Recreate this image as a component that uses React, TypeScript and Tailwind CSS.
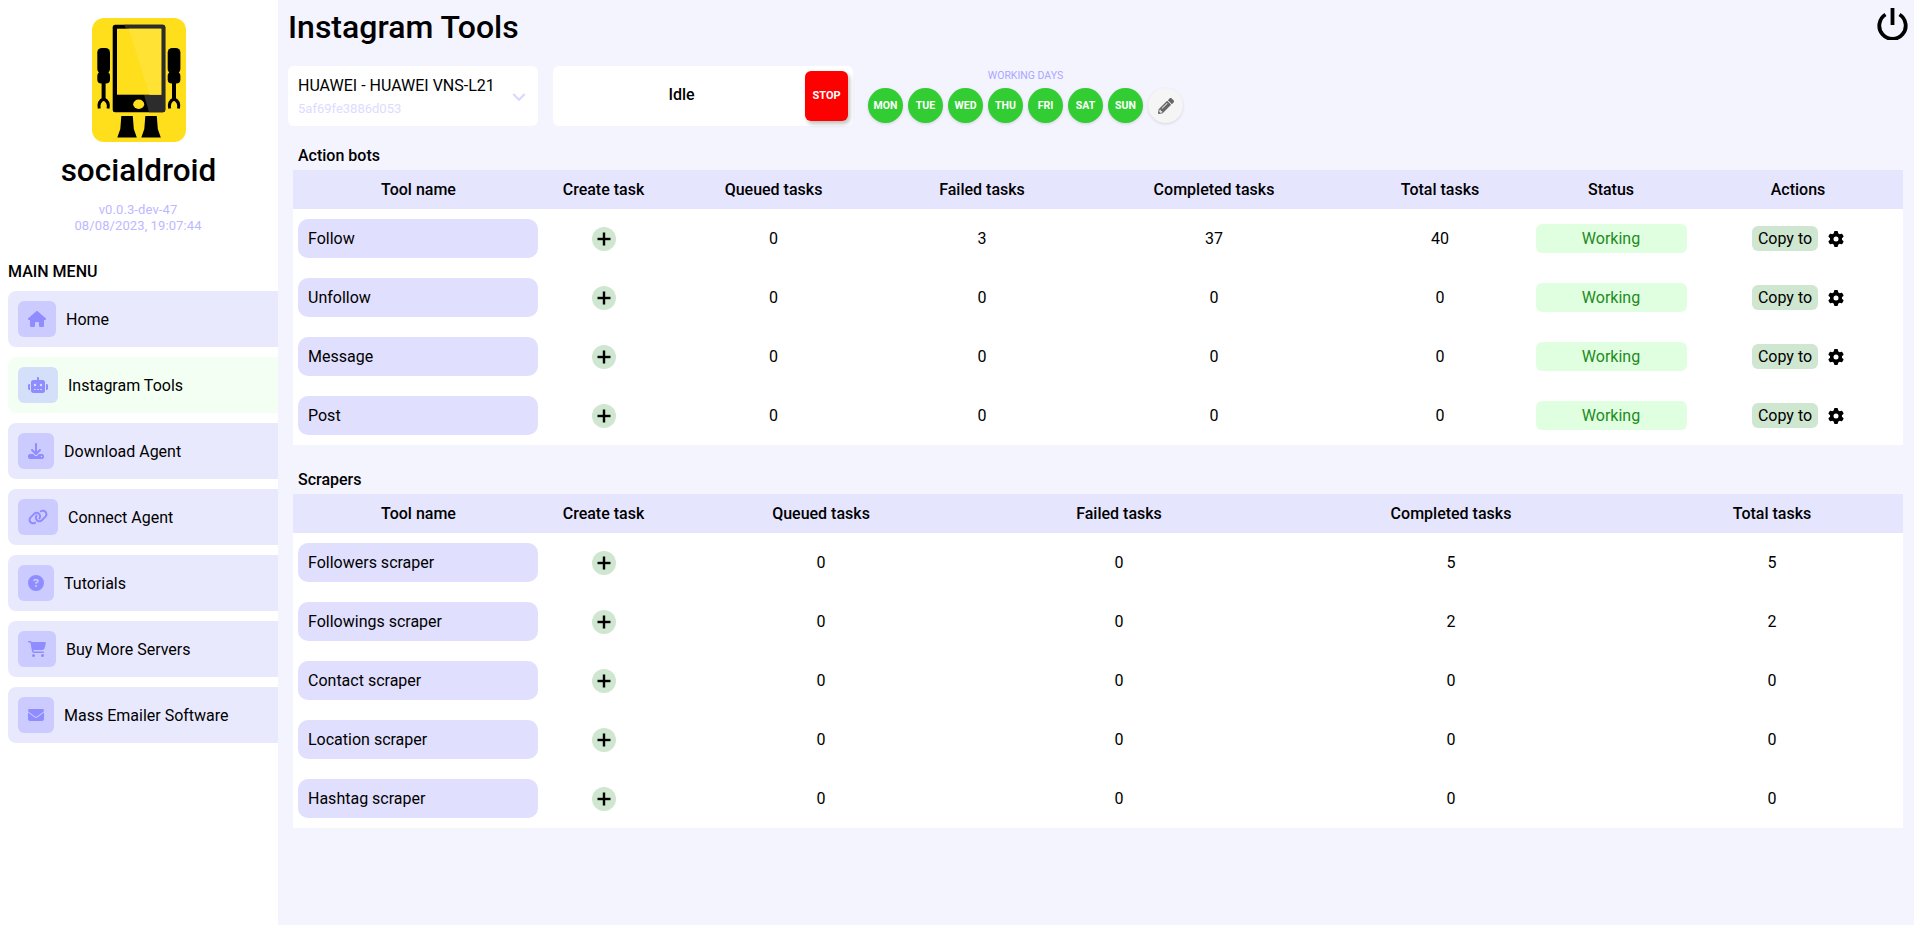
import React from 'react';
import {
  FaHouse,
  FaRobot,
  FaDownload,
  FaLink,
  FaCircleQuestion,
  FaCartShopping,
  FaEnvelope,
  FaGear,
} from 'react-icons/fa6';
import { FaPencilAlt } from 'react-icons/fa';
import { MdExpandMore } from 'react-icons/md';

const menu = [
  { label: 'Home', icon: FaHouse, iconClass: 'w-[18px] h-4' },
  { label: 'Instagram Tools', icon: FaRobot, iconClass: 'w-5 h-4', active: true },
  { label: 'Download Agent', icon: FaDownload, iconClass: 'w-4 h-4' },
  { label: 'Connect Agent', icon: FaLink, iconClass: 'w-5 h-4' },
  { label: 'Tutorials', icon: FaCircleQuestion, iconClass: 'w-4 h-4' },
  { label: 'Buy More Servers', icon: FaCartShopping, iconClass: 'w-[18px] h-4' },
  { label: 'Mass Emailer Software', icon: FaEnvelope, iconClass: 'w-4 h-4' },
];

const days = ['MON', 'TUE', 'WED', 'THU', 'FRI', 'SAT', 'SUN'];

const actionBots = [
  { name: 'Follow', queued: 0, failed: 3, completed: 37, total: 40 },
  { name: 'Unfollow', queued: 0, failed: 0, completed: 0, total: 0 },
  { name: 'Message', queued: 0, failed: 0, completed: 0, total: 0 },
  { name: 'Post', queued: 0, failed: 0, completed: 0, total: 0 },
];

const scrapers = [
  { name: 'Followers scraper', queued: 0, failed: 0, completed: 5, total: 5 },
  { name: 'Followings scraper', queued: 0, failed: 0, completed: 2, total: 2 },
  { name: 'Contact scraper', queued: 0, failed: 0, completed: 0, total: 0 },
  { name: 'Location scraper', queued: 0, failed: 0, completed: 0, total: 0 },
  { name: 'Hashtag scraper', queued: 0, failed: 0, completed: 0, total: 0 },
];

const actionCols = 'grid grid-cols-[254px_113px_227px_190px_274px_178px_164px_210px]';
const scraperCols = 'grid grid-cols-[254px_113px_322px_274px_390px_252px]';

const Arm = ({ x }: { x: number }) => (
  <g transform={`translate(${x} 0)`} fill="#000">
    <rect x="0" y="30" width="12.7" height="25.500" rx="4.500" />
    <rect x="0" y="54" width="12.7" height="11.500" rx="4" />
    <rect x="4.300" y="64" width="4" height="19" />
    <path d="M2 90.500Q0.500 83.500 6.300 81Q12.300 83.500 10.700 90.500" fill="none" stroke="#000" strokeWidth="3" />
  </g>
);

const Foot = ({ x }: { x: number }) => (
  <path
    transform={`translate(${x} 0)`}
    d="M4 98h11.500l1 13 3 8.500H0l3-8.500z"
    fill="#000"
  />
);

const Logo = () => (
  <svg width="94" height="124" viewBox="0 0 94 124" className="block">
    <rect width="94" height="124" rx="12" fill="#ffdf1b" />
    <rect x="20.700" y="6.700" width="52.600" height="87.600" rx="2.500" fill="#000" />
    <path d="M32 6.700h39q2.300 0 2.300 2.500v82.800q0 2.300-2.300 2.300H57l-5-17.600h17.300V10.700H34z" fill="#2c2c2c" />
    <rect x="25" y="10.700" width="44.300" height="66" fill="#ffdf1b" />
    <path d="M36.700 10.700h32.600v66H57.500z" fill="#ffe233" />
    <ellipse cx="46.700" cy="86.300" rx="5.500" ry="4.700" fill="#ffdf1b" />
    <Arm x={5.300} />
    <Arm x={75.700} />
    <Foot x={25.300} />
    <Foot x={49.300} />
  </svg>
);

const Sidebar = () => (
  <aside className="w-[278px] shrink-0 bg-white pt-[18px] flex flex-col">
    <div className="flex justify-center">
      <Logo />
    </div>
    <h2 className="text-center pr-[1px] text-[31.500px] font-medium leading-[38px] mt-[10px] text-black">socialdroid</h2>
    <div className="text-center pr-[2px] text-[13px] leading-4 mt-[12px] tracking-[0.1px] text-[#bdb8ff]">
      <div>v0.0.3-dev-47</div>
      <div>08/08/2023, 19:07:44</div>
    </div>
    <h3 className="text-[16px] leading-[19px] font-medium mt-[28px] ml-2 text-black">MAIN MENU</h3>
    <nav className="mt-[10px] ml-2 flex flex-col gap-[10px]">
      {menu.map((item) => {
        const Icon = item.icon;
        return (
          <div
            key={item.label}
            className={
              item.active
                ? 'h-[56px] rounded-l-lg bg-[#f4fff4] flex items-center pl-[10px] gap-[10px]'
                : 'h-[56px] rounded-l-lg bg-[#e9e9fd] flex items-center pl-[10px] gap-[10px]'
            }
          >
            <span
              className={
                item.active
                  ? 'h-[36px] px-[10px] rounded-md bg-[#d4dffa] flex items-center text-[#8f8cff]'
                  : 'h-[36px] px-[10px] rounded-md bg-[#cccbff] flex items-center text-[#8f8cff]'
              }
            >
              <Icon className={item.iconClass} />
            </span>
            <span className="text-[16px] pt-[1px] text-black">{item.label}</span>
          </div>
        );
      })}
    </nav>
  </aside>
);

const AddButton = () => (
  <span className="w-6 h-6 rounded-full bg-[#cfe6d0] flex items-center justify-center">
    <svg width="14" height="14" viewBox="0 0 14 14" fill="#000">
      <rect x="0.500" y="5.800" width="13" height="2.400" />
      <rect x="5.800" y="0.500" width="2.400" height="13" />
    </svg>
  </span>
);

const ToolName = ({ name }: { name: string }) => (
  <div className="mx-[5px] h-[39px] w-[240px] rounded-[10px] bg-[#e0dffd] flex items-center px-[10px] text-[16px] text-black">
    {name}
  </div>
);

const Header = ({ cols, labels }: { cols: string; labels: string[] }) => (
  <div className={`${cols} h-[39px] items-center bg-[#e6e5fe] text-[16px] font-medium text-black text-center`}>
    {labels.map((l, i) => (
      <div key={l} className={i === 0 ? 'pr-[3px]' : ''}>
        {l}
      </div>
    ))}
  </div>
);

const PowerIcon = () => (
  <svg
    width="31"
    height="32"
    viewBox="0 0 31 32"
    fill="none"
    stroke="#000"
    strokeWidth="3.800"
    className="absolute top-[8px] right-[6px]"
  >
    <path d="M8.500 6.500A13.200 13.200 0 1 0 22.500 6.500" />
    <path d="M15.500 0V17" />
  </svg>
);

const App = () => {
  return (
    <div className="flex h-[925px] overflow-hidden bg-[#f4f4ff] font-['Roboto',sans-serif]">
      <Sidebar />
      <main className="flex-1 relative pl-[10px]">
        <h1 className="text-[32px] leading-[38px] font-medium text-black mt-[8px]">Instagram Tools</h1>
        <PowerIcon />

        <div className="flex items-start mt-[20px]">
          <div className="w-[250px] h-[60px] rounded-md bg-white relative pl-[10px] pt-[10px]">
            <div className="text-[16px] leading-[19px] text-black">HUAWEI - HUAWEI VNS-L21</div>
            <div className="text-[13px] leading-[15px] mt-[6px] text-[#dcdcff]">5af69fe3886d053</div>
            <MdExpandMore className="absolute right-[6px] top-[18px] text-[#d9d8ff]" size={26} />
          </div>
          <div className="w-[300px] h-[60px] ml-[15px] rounded-md bg-white flex items-center justify-between pl-[60px] pr-[5px]">
            <span className="w-[137px] pb-[3px] text-center text-[16px] font-medium text-black">Idle</span>
            <span className="w-[43px] h-[50px] rounded-md bg-[#ff0000] flex items-center justify-center text-[11px] font-bold text-white shadow-[2px_3px_4px_rgba(0,0,0,0.25)]">
              STOP
            </span>
          </div>
          <div className="ml-[15px] flex flex-col items-start">
            <div className="w-full mt-[4px] text-center text-[10.500px] leading-[12px] text-[#a9a6ff]">WORKING DAYS</div>
            <div className="flex gap-[5px] mt-[6px]">
              {days.map((d) => (
                <span
                  key={d}
                  className="w-[35px] h-[35px] rounded-full bg-[#32cd32] flex items-center justify-center text-[10.500px] font-bold text-white shadow-[0_1px_3px_rgba(0,0,0,0.15)]"
                >
                  {d}
                </span>
              ))}
              <span className="w-[35px] h-[35px] rounded-full bg-[#f5f5f5] flex items-center justify-center text-[#666] shadow-[0_1px_3px_rgba(0,0,0,0.12)]">
                <FaPencilAlt size={16} />
              </span>
            </div>
          </div>
        </div>

        <div className="ml-[5px] mr-[11px]">
          <div className="text-[16px] leading-[18px] font-medium text-black mt-[21px] ml-[5px] mb-[5px]">Action bots</div>
          <Header
            cols={actionCols}
            labels={['Tool name', 'Create task', 'Queued tasks', 'Failed tasks', 'Completed tasks', 'Total tasks', 'Status', 'Actions']}
          />
          <div className="bg-white pt-[10px] pb-[10px] flex flex-col gap-[20px]">
            {actionBots.map((r) => (
              <div key={r.name} className={`${actionCols} h-[39px] items-center text-center text-[16px] text-black`}>
                <ToolName name={r.name} />
                <div className="flex justify-center"><AddButton /></div>
                <div>{r.queued}</div>
                <div>{r.failed}</div>
                <div>{r.completed}</div>
                <div>{r.total}</div>
                <div className="flex justify-center">
                  <span className="w-[151px] h-[29px] rounded-md bg-[#e0ffe0] flex items-center justify-center text-[#228b22]">Working</span>
                </div>
                <div className="flex items-center justify-center gap-[10px]">
                  <span className="h-[25px] px-[6px] rounded-md bg-[#cfe6d0] flex items-center">Copy to</span>
                  <FaGear size={16} />
                </div>
              </div>
            ))}
          </div>

          <div className="text-[16px] leading-[18px] font-medium text-black mt-[26px] ml-[5px] mb-[5px]">Scrapers</div>
          <Header
            cols={scraperCols}
            labels={['Tool name', 'Create task', 'Queued tasks', 'Failed tasks', 'Completed tasks', 'Total tasks']}
          />
          <div className="bg-white pt-[10px] pb-[10px] flex flex-col gap-[20px]">
            {scrapers.map((r) => (
              <div key={r.name} className={`${scraperCols} h-[39px] items-center text-center text-[16px] text-black`}>
                <ToolName name={r.name} />
                <div className="flex justify-center"><AddButton /></div>
                <div>{r.queued}</div>
                <div>{r.failed}</div>
                <div>{r.completed}</div>
                <div>{r.total}</div>
              </div>
            ))}
          </div>
        </div>
      </main>
    </div>
  );
};

export default App;
